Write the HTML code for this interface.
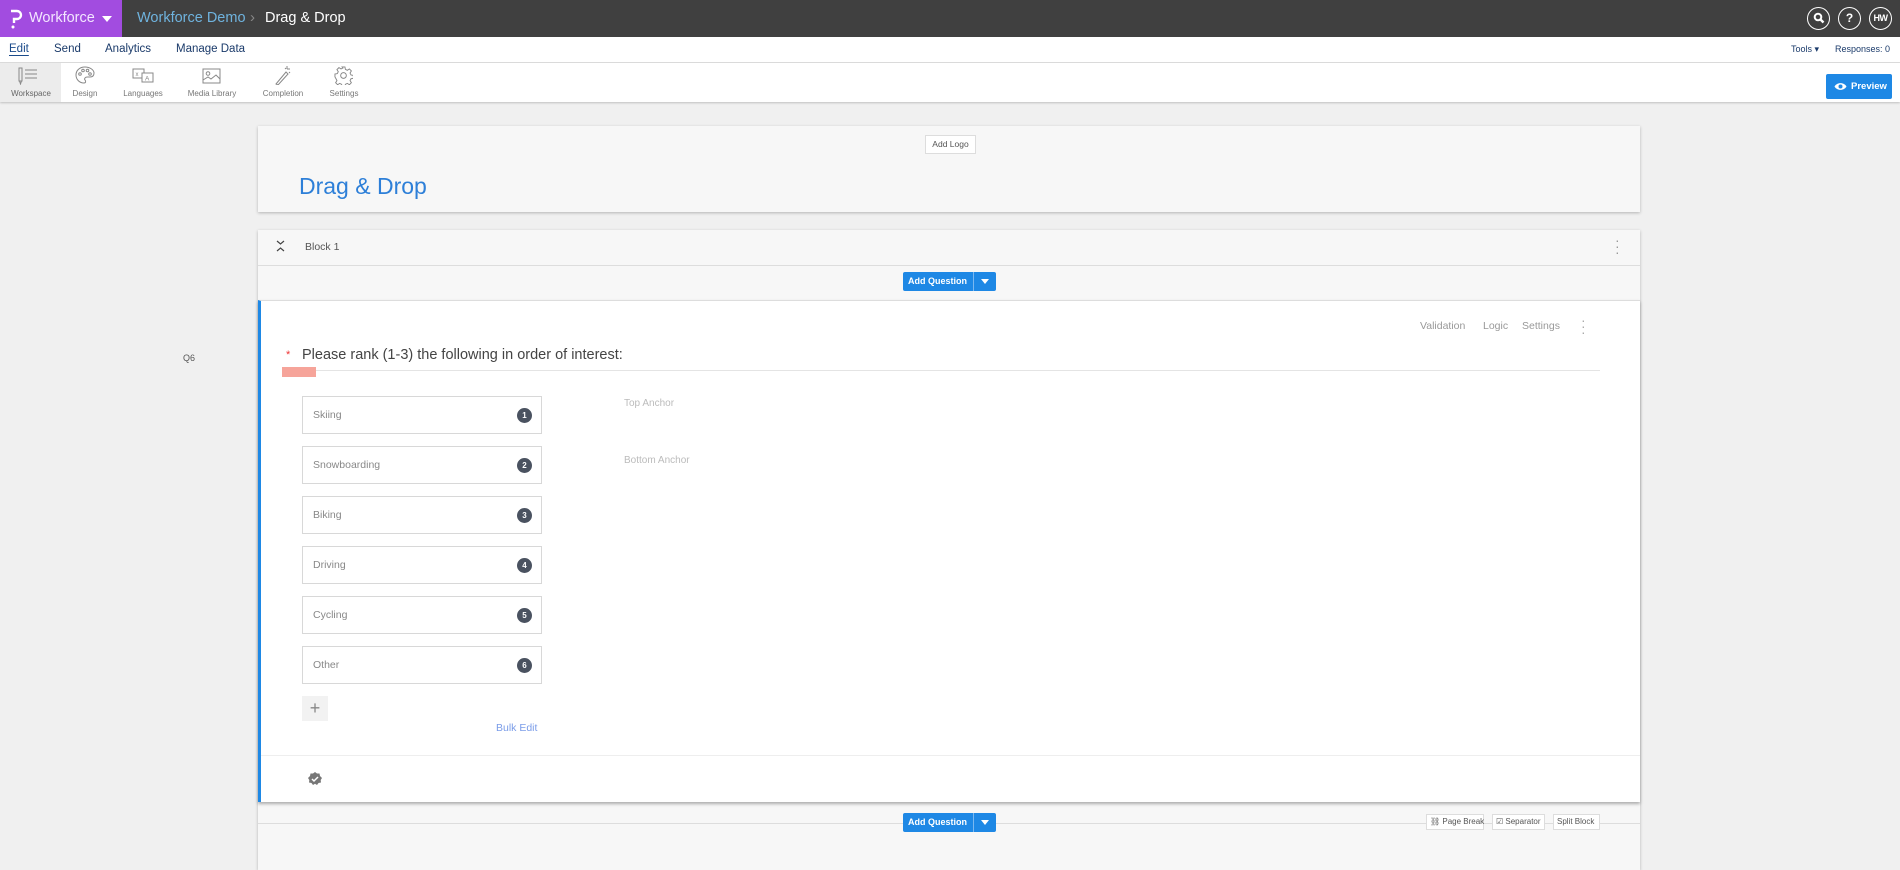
<!DOCTYPE html>
<html><head><meta charset="utf-8">
<style>
*{box-sizing:border-box;margin:0;padding:0}
body{width:1900px;height:848px;overflow:hidden;background:#f0f0f0;font-family:"Liberation Sans",sans-serif;position:relative;color:#333}
.a{position:absolute}
.top{left:0;top:0;width:1900px;height:37px;background:#404040}
.brand{left:0;top:0;width:122px;height:37px;background:#a24ce0;color:#fff;font-size:14.5px}
.circ{width:23px;height:23px;border:1.5px solid #fff;border-radius:50%;color:#fff;font-weight:bold;font-size:12px;text-align:center;line-height:20px;top:7px}
.nav{left:0;top:37px;width:1900px;height:26px;background:#fff;border-bottom:1px solid #ddd}
.nav span{position:absolute;top:6px;font-size:11.5px;color:#1a3a6a}
.tb{left:0;top:63px;width:1900px;height:39px;background:#fff;box-shadow:0 1px 2px rgba(0,0,0,.2)}
.tl{position:absolute;top:26px;font-size:8px;color:#777;text-align:center}
.card{background:#f7f7f7;box-shadow:0 1px 3px rgba(0,0,0,.25)}
.btn{background:#1e88e5;color:#fff;font-size:9px;font-weight:bold;border-radius:2px}
.ch{position:absolute;left:302px;width:240px;height:38px;border:1px solid #d8d8d8;background:#fff;font-size:10.5px;color:#888;padding:12px 0 0 10px}
.ch b{position:absolute;right:9px;top:11px;width:15px;height:15px;border-radius:50%;background:#4a5260;color:#fff;font-size:8px;text-align:center;line-height:15px}
.sm{border:1px solid #ddd;background:#fff;font-size:8px;color:#555;height:16px;line-height:14px;padding:0 3px;white-space:nowrap}
</style></head><body>
<div class="a top"></div>
<div class="a brand"><svg class="a" style="left:9px;top:9px" width="14" height="20" viewBox="0 0 14 20"><path d="M2 2h6a4 4 0 0 1 0 8H5v4" fill="none" stroke="#fff" stroke-width="2.4"/><circle cx="4" cy="18" r="1.5" fill="#fff"/></svg><span class="a" style="left:29px;top:10px;color:#f3e6ff">Workforce</span><svg class="a" style="left:102px;top:16px" width="10" height="6"><path d="M0 0h10L5 6z" fill="#fff"/></svg></div>
<div class="a" style="left:137px;top:10px;font-size:14.5px;color:#6fb3de">Workforce Demo</div>
<div class="a" style="left:250px;top:9px;font-size:15px;color:#888">›</div>
<div class="a" style="left:265px;top:10px;font-size:14.5px;color:#fff">Drag &amp; Drop</div>
<div class="a circ" style="left:1807px"><svg width="12" height="12" style="margin-top:4px" viewBox="0 0 12 12"><circle cx="5" cy="5" r="3.3" fill="none" stroke="#fff" stroke-width="2"/><path d="M7.5 7.5l3 3" stroke="#fff" stroke-width="2.4"/></svg></div>
<div class="a circ" style="left:1838px">?</div>
<div class="a circ" style="left:1869px;font-size:9px;letter-spacing:-.5px;line-height:20px">HW</div>
<div class="a nav"><span style="left:9px;text-decoration:underline;text-underline-offset:3px;color:#1a4a8a">Edit</span><span style="left:54px">Send</span><span style="left:105px">Analytics</span><span style="left:176px">Manage Data</span>
<span style="left:1791px;top:7px;font-size:9px">Tools ▾</span><span style="left:1835px;top:7px;font-size:9px">Responses: 0</span></div>
<div class="a tb">
<div class="a" style="left:0;top:0;width:61px;height:39px;background:#ececec"></div>
<svg class="a" style="left:18px;top:4px" width="20" height="18" viewBox="0 0 20 18" fill="none" stroke="#888" stroke-width="1"><rect x="1" y="1" width="3" height="13"/><path d="M1.5 14l1 3 1-3M7 3h12M7 7h12M7 11h12"/></svg>
<div class="tl" style="left:6px;width:50px;color:#666">Workspace</div>
<svg class="a" style="left:75px;top:3px" width="20" height="18" viewBox="0 0 20 18" fill="none" stroke="#888"><path d="M10 1C4 1 1 5 1 9s3 8 8 8c2 0 2-2 1-3s0-3 2-3h3c3 0 4-2 4-4 0-3-4-6-9-6z"/><circle cx="5" cy="8" r="1.3"/><circle cx="8" cy="4.5" r="1.3"/><circle cx="12.5" cy="4.5" r="1.3"/><circle cx="15" cy="8" r="1.3"/></svg>
<div class="tl" style="left:65px;width:40px">Design</div>
<svg class="a" style="left:132px;top:5px" width="22" height="15" viewBox="0 0 22 15" fill="none" stroke="#888"><rect x="1" y="1" width="11" height="9"/><rect x="10" y="5" width="11" height="9" fill="#fff"/><text x="3.5" y="8" font-size="6" fill="#888" stroke="none">x</text><text x="13" y="12.5" font-size="6.5" fill="#888" stroke="none">A</text></svg>
<div class="tl" style="left:118px;width:50px">Languages</div>
<svg class="a" style="left:202px;top:5px" width="19" height="16" viewBox="0 0 19 16" fill="none" stroke="#888"><rect x="1" y="1" width="17" height="14"/><circle cx="6" cy="5.5" r="1.8"/><path d="M1 12l5-3 3 2 5-4 4 4"/></svg>
<div class="tl" style="left:182px;width:60px">Media Library</div>
<svg class="a" style="left:274px;top:2px" width="18" height="20" viewBox="0 0 18 20" fill="none" stroke="#888"><path d="M2 19L12 7l2 2L4 20zM13 1v3M16 4h-3M11 3l1 1M16 8l-1-1"/></svg>
<div class="tl" style="left:256px;width:54px">Completion</div>
<svg class="a" style="left:334px;top:3px" width="19" height="19" viewBox="0 0 20 20" fill="none" stroke="#888"><circle cx="10" cy="10" r="3"/><path d="M8.5 1h3l.5 2.5 2 1 2.2-1.4 2.1 2.1-1.4 2.2 1 2 2.5.5v3l-2.5.5-1 2 1.4 2.2-2.1 2.1-2.2-1.4-2 1-.5 2.5h-3l-.5-2.5-2-1-2.2 1.4-2.1-2.1 1.4-2.2-1-2L1 11.5v-3l2.5-.5 1-2-1.4-2.2 2.1-2.1 2.2 1.4 2-1z"/></svg>
<div class="tl" style="left:324px;width:40px">Settings</div>
<div class="a btn" style="left:1826px;top:11px;width:66px;height:25px;font-size:9.5px;line-height:25px;padding-left:25px">Preview</div>
<svg class="a" style="left:1834px;top:19px" width="13" height="9" viewBox="0 0 13 9"><path d="M0.5 4.5C3 0 10 0 12.5 4.5 10 9 3 9 .5 4.5z" fill="#fff"/><circle cx="6.5" cy="4.5" r="2" fill="#1e88e5"/></svg>
</div>

<div class="a card" style="left:258px;top:126px;width:1382px;height:86px"></div>
<div class="a sm" style="left:925px;top:135px;width:51px;height:19px;line-height:17px;font-size:8.5px;text-align:center">Add Logo</div>
<div class="a" style="left:299px;top:173px;font-size:23px;color:#2d7fd8">Drag &amp; Drop</div>

<div class="a card" style="left:258px;top:230px;width:1382px;height:640px"></div>
<div class="a" style="left:258px;top:265px;width:1382px;height:1px;background:#ddd"></div>
<svg class="a" style="left:276px;top:240px" width="9" height="12" viewBox="0 0 9 12" fill="none" stroke="#444" stroke-width="1.2"><path d="M1 1l3.5 3 3.5-3M1 11l3.5-3 3.5 3"/></svg>
<div class="a" style="left:305px;top:241px;font-size:10.5px;color:#555">Block 1</div>
<div class="a" style="left:1615px;top:237px;color:#999;font-size:14px;line-height:6px;width:4px">·<br>·<br>·</div>
<div class="a btn" style="left:903px;top:272px;width:93px;height:19px;line-height:19px;padding-left:5px">Add Question</div>
<div class="a" style="left:973px;top:272px;width:1px;height:19px;background:#7bb8f0"></div>
<svg class="a" style="left:981px;top:279px" width="8" height="5"><path d="M0 0h8L4 5z" fill="#fff"/></svg>

<div class="a" style="left:258px;top:300px;width:1382px;height:502px;background:#fff;border-left:3px solid #1e88e5;box-shadow:0 2px 3px rgba(0,0,0,.3);border-top:1px solid #ddd"></div>
<div class="a" style="left:183px;top:353px;font-size:9px;color:#555">Q6</div>
<div class="a" style="left:1420px;top:320px;font-size:10.5px;color:#999">Validation</div>
<div class="a" style="left:1483px;top:320px;font-size:10.5px;color:#999">Logic</div>
<div class="a" style="left:1522px;top:320px;font-size:10.5px;color:#999">Settings</div>
<div class="a" style="left:1581px;top:317px;color:#aaa;font-size:14px;line-height:6px;width:4px">·<br>·<br>·</div>
<div class="a" style="left:286px;top:349px;font-size:11px;color:#e33">*</div>
<div class="a" style="left:302px;top:347px;font-size:14.5px;color:#444">Please rank (1-3) the following in order of interest:</div>
<div class="a" style="left:285px;top:370px;width:1315px;height:1px;background:#e4e4e4"></div>
<div class="a" style="left:282px;top:367px;width:34px;height:10px;background:#f6a49a"></div>

<div class="ch" style="top:396px">Skiing<b>1</b></div>
<div class="ch" style="top:446px">Snowboarding<b>2</b></div>
<div class="ch" style="top:496px">Biking<b>3</b></div>
<div class="ch" style="top:546px">Driving<b>4</b></div>
<div class="ch" style="top:596px">Cycling<b>5</b></div>
<div class="ch" style="top:646px">Other<b>6</b></div>
<div class="a" style="left:624px;top:398px;font-size:10px;color:#bbb">Top Anchor</div>
<div class="a" style="left:624px;top:455px;font-size:10px;color:#bbb">Bottom Anchor</div>
<div class="a" style="left:302px;top:696px;width:26px;height:25px;background:#f2f2f2;color:#888;font-size:18px;text-align:center;line-height:24px">+</div>
<div class="a" style="left:496px;top:722px;font-size:10.5px;color:#7a9ce8">Bulk Edit</div>
<div class="a" style="left:261px;top:755px;width:1379px;height:1px;background:#eee"></div>
<svg class="a" style="left:308px;top:772px" width="14" height="14" viewBox="0 0 14 14"><path d="M7 0l2 1.5 2.5 0 .5 2.5 2 2-1.3 2 .3 2.5-2.5.5-1.5 2-2-1.2-2 1.2-1.5-2-2.5-.5.3-2.5L0 6l2-2 .5-2.5 2.5 0z" fill="#777"/><path d="M4 7l2 2 4-4" fill="none" stroke="#fff" stroke-width="1.5"/></svg>

<div class="a" style="left:258px;top:823px;width:1382px;height:1px;background:#ddd"></div>
<div class="a btn" style="left:903px;top:813px;width:93px;height:19px;line-height:19px;padding-left:5px">Add Question</div>
<div class="a" style="left:973px;top:813px;width:1px;height:19px;background:#7bb8f0"></div>
<svg class="a" style="left:981px;top:820px" width="8" height="5"><path d="M0 0h8L4 5z" fill="#fff"/></svg>
<div class="a sm" style="left:1426px;top:814px;width:58px">⛓ Page Break</div>
<div class="a sm" style="left:1492px;top:814px;width:53px">☑ Separator</div>
<div class="a sm" style="left:1553px;top:814px;width:47px">Split Block</div>
</body></html>
